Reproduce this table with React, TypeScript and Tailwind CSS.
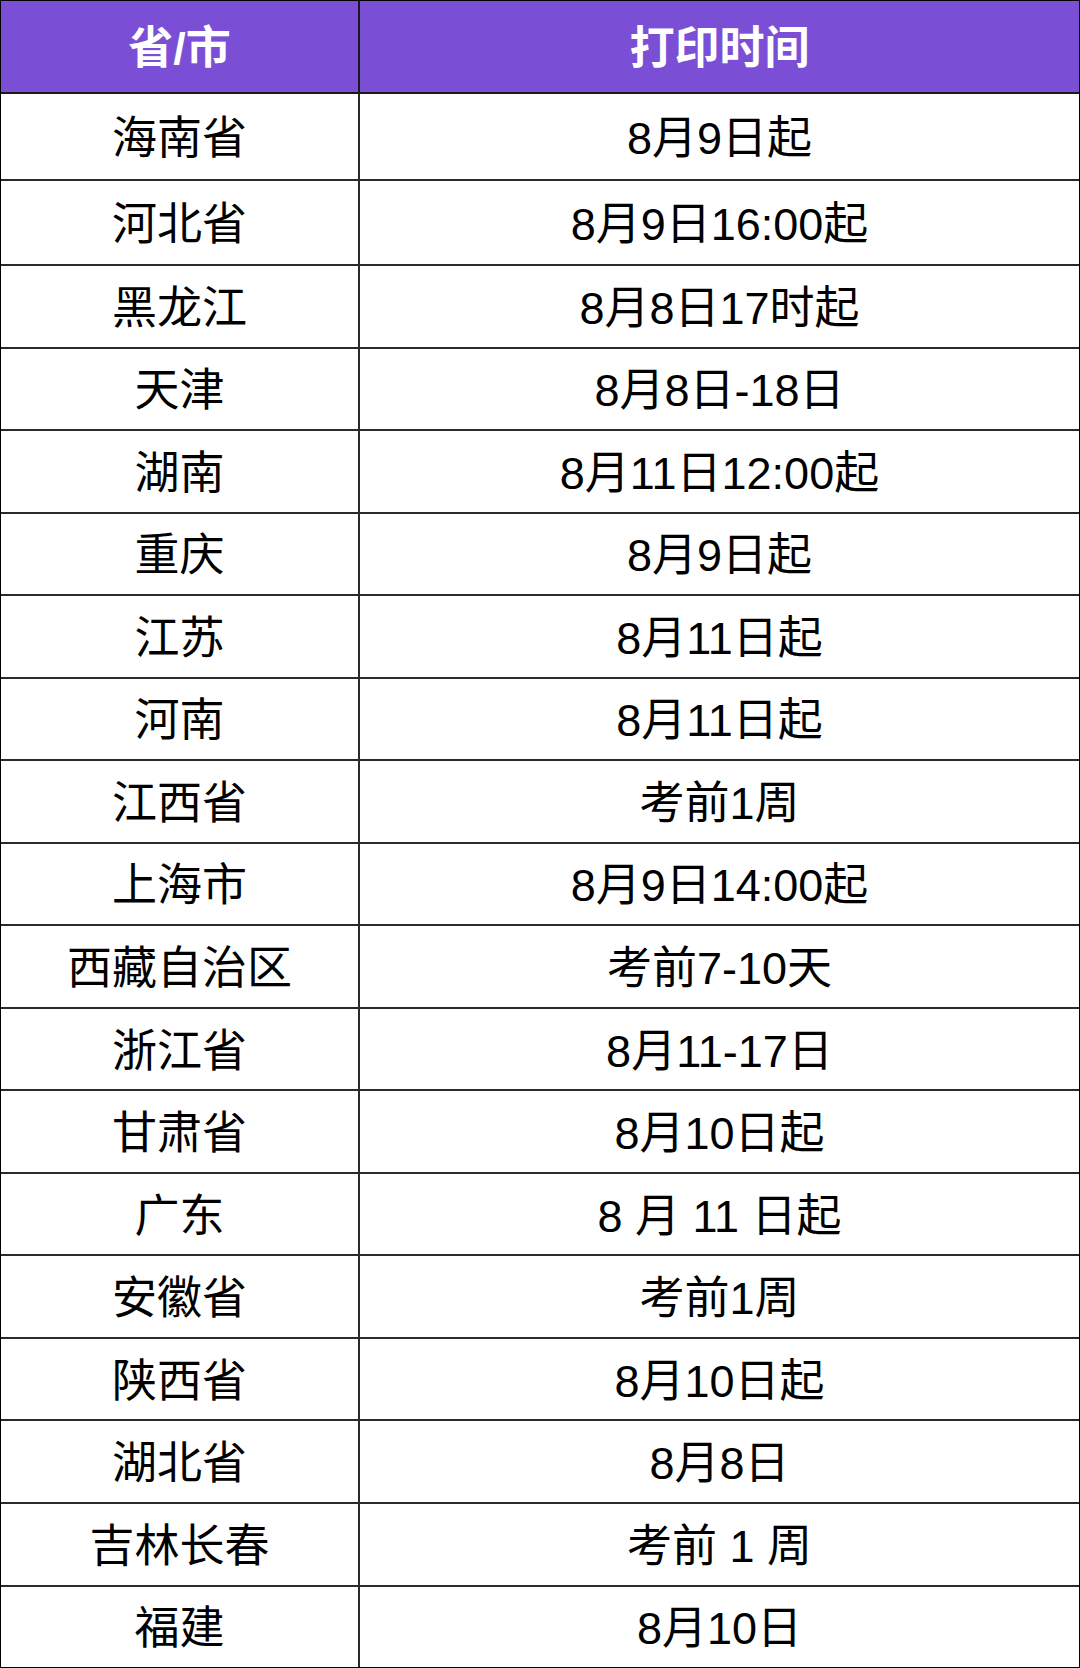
const rows: [string, string][] = [
  ['海南省', '8月9日起'],
  ['河北省', '8月9日16:00起'],
  ['黑龙江', '8月8日17时起'],
  ['天津', '8月8日-18日'],
  ['湖南', '8月11日12:00起'],
  ['重庆', '8月9日起'],
  ['江苏', '8月11日起'],
  ['河南', '8月11日起'],
  ['江西省', '考前1周'],
  ['上海市', '8月9日14:00起'],
  ['西藏自治区', '考前7-10天'],
  ['浙江省', '8月11-17日'],
  ['甘肃省', '8月10日起'],
  ['广东', '8 月 11 日起'],
  ['安徽省', '考前1周'],
  ['陕西省', '8月10日起'],
  ['湖北省', '8月8日'],
  ['吉林长春', '考前 1 周'],
  ['福建', '8月10日'],
];

const rowHeight = (i: number) => {
  if (i === 0) return 'h-[87px]';
  if (i === 1) return 'h-[85px]';
  return 'flex-1';
};

export default function App() {
  return (
    <div
      className="w-[1080px] h-[1668px] flex flex-col bg-white border border-black text-[45px] leading-none text-black"
      style={{ fontFamily: '"Liberation Sans", "Noto Sans CJK SC", sans-serif' }}
    >
      <div className="h-[93px] flex shrink-0 bg-[#7b4fd5] text-white font-bold border-b-2 border-[#1a1a1a]">
        <div className="w-[359px] flex items-center justify-center pt-1 border-r-2 border-[#1a1a1a]">省/市</div>
        <div className="flex-1 flex items-center justify-center pt-1">打印时间</div>
      </div>
      {rows.map(([province, time], i) => (
        <div
          key={province}
          className={`${rowHeight(i)} flex ${i < rows.length - 1 ? 'border-b-2 border-[#2a2a2a]' : ''}`}
        >
          <div className="w-[359px] flex items-center justify-center pt-1 border-r-2 border-[#2a2a2a] whitespace-pre">
            {province}
          </div>
          <div className="flex-1 flex items-center justify-center pt-1 whitespace-pre">{time}</div>
        </div>
      ))}
    </div>
  );
}
